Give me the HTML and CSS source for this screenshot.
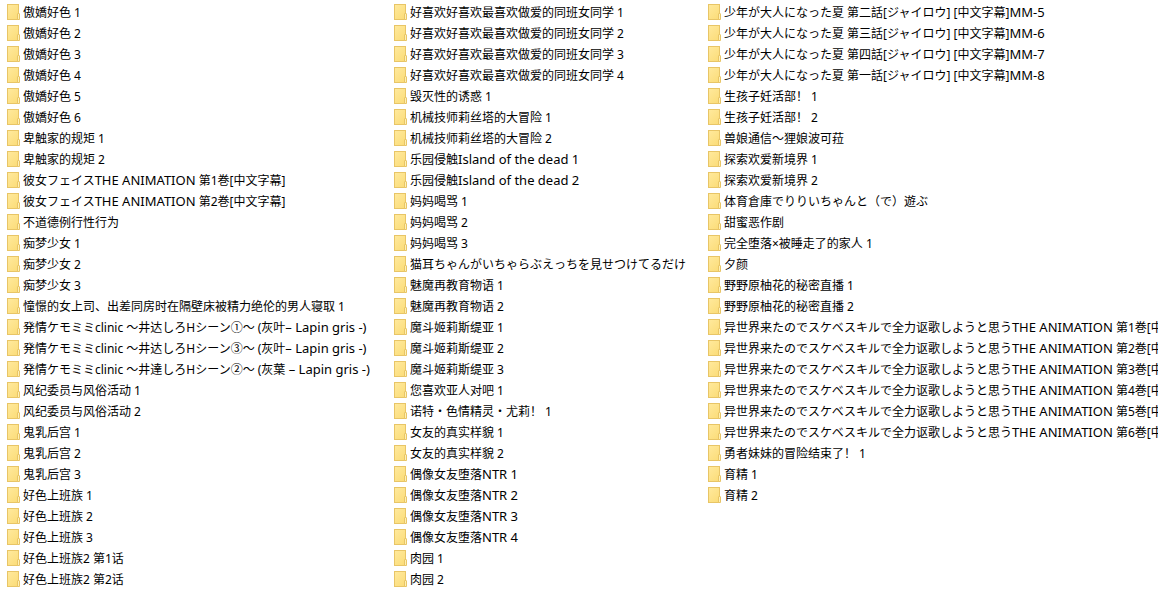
FILE: index.html
```html
<!DOCTYPE html>
<html lang="zh-CN">
<head>
    <meta charset="UTF-8">
    <meta name="viewport" content="width=device-width, initial-scale=1.0">
    <title>文件夹</title>
    <link rel="stylesheet" href="styles.css">
</head>
<body>
    <main class="file-view">
        <ul class="column">
            <li class="folder">傲嬌好色 1</li>
            <li class="folder">傲嬌好色 2</li>
            <li class="folder">傲嬌好色 3</li>
            <li class="folder">傲嬌好色 4</li>
            <li class="folder">傲嬌好色 5</li>
            <li class="folder">傲嬌好色 6</li>
            <li class="folder">卑触家的规矩 1</li>
            <li class="folder">卑触家的规矩 2</li>
            <li class="folder">彼女フェイス<span class="latin">THE ANIMATION</span> 第1巻[中文字幕]</li>
            <li class="folder">彼女フェイス<span class="latin">THE ANIMATION</span> 第2巻[中文字幕]</li>
            <li class="folder">不道德例行性行为</li>
            <li class="folder">痴梦少女 1</li>
            <li class="folder">痴梦少女 2</li>
            <li class="folder">痴梦少女 3</li>
            <li class="folder">憧憬的女上司、出差同房时在隔壁床被精力绝伦的男人寝取 1</li>
            <li class="folder">発情ケモミミclinic ～井达しろHシーン①～ (灰叶<span class="latin">– Lapin gris -)</span></li>
            <li class="folder">発情ケモミミclinic ～井达しろHシーン③～ (灰叶<span class="latin">– Lapin gris -)</span></li>
            <li class="folder">発情ケモミミclinic ～井達しろHシーン②～ (灰葉<span class="latin"> – Lapin gris -)</span></li>
            <li class="folder">风纪委员与风俗活动 1</li>
            <li class="folder">风纪委员与风俗活动 2</li>
            <li class="folder">鬼乳后宫 1</li>
            <li class="folder">鬼乳后宫 2</li>
            <li class="folder">鬼乳后宫 3</li>
            <li class="folder">好色上班族 1</li>
            <li class="folder">好色上班族 2</li>
            <li class="folder">好色上班族 3</li>
            <li class="folder">好色上班族2 第1话</li>
            <li class="folder">好色上班族2 第2话</li>
        </ul>
        <ul class="column">
            <li class="folder">好喜欢好喜欢最喜欢做爱的同班女同学 1</li>
            <li class="folder">好喜欢好喜欢最喜欢做爱的同班女同学 2</li>
            <li class="folder">好喜欢好喜欢最喜欢做爱的同班女同学 3</li>
            <li class="folder">好喜欢好喜欢最喜欢做爱的同班女同学 4</li>
            <li class="folder">毁灭性的诱惑 1</li>
            <li class="folder">机械技师莉丝塔的大冒险 1</li>
            <li class="folder">机械技师莉丝塔的大冒险 2</li>
            <li class="folder">乐园侵触<span class="latin">Island of the dead 1</span></li>
            <li class="folder">乐园侵触<span class="latin">Island of the dead 2</span></li>
            <li class="folder">妈妈喝骂 1</li>
            <li class="folder">妈妈喝骂 2</li>
            <li class="folder">妈妈喝骂 3</li>
            <li class="folder">猫耳ちゃんがいちゃらぶえっちを見せつけてるだけ</li>
            <li class="folder">魅魔再教育物语 1</li>
            <li class="folder">魅魔再教育物语 2</li>
            <li class="folder">魔斗姬莉斯缇亚 1</li>
            <li class="folder">魔斗姬莉斯缇亚 2</li>
            <li class="folder">魔斗姬莉斯缇亚 3</li>
            <li class="folder">您喜欢亚人对吧 1</li>
            <li class="folder">诺特・色情精灵・尤莉！ 1</li>
            <li class="folder">女友的真实样貌 1</li>
            <li class="folder">女友的真实样貌 2</li>
            <li class="folder">偶像女友堕落<span class="latin">NTR 1</span></li>
            <li class="folder">偶像女友堕落<span class="latin">NTR 2</span></li>
            <li class="folder">偶像女友堕落<span class="latin">NTR 3</span></li>
            <li class="folder">偶像女友堕落<span class="latin">NTR 4</span></li>
            <li class="folder">肉园 1</li>
            <li class="folder">肉园 2</li>
        </ul>
        <ul class="column">
            <li class="folder">少年が大人になった夏 第二話[ジャイロウ] [中文字幕]<span class="latin">MM-5</span></li>
            <li class="folder">少年が大人になった夏 第三話[ジャイロウ] [中文字幕]<span class="latin">MM-6</span></li>
            <li class="folder">少年が大人になった夏 第四話[ジャイロウ] [中文字幕]<span class="latin">MM-7</span></li>
            <li class="folder">少年が大人になった夏 第一話[ジャイロウ] [中文字幕]<span class="latin">MM-8</span></li>
            <li class="folder">生孩子妊活部！ 1</li>
            <li class="folder">生孩子妊活部！ 2</li>
            <li class="folder">兽娘通信～狸娘波可菈</li>
            <li class="folder">探索欢爱新境界 1</li>
            <li class="folder">探索欢爱新境界 2</li>
            <li class="folder">体育倉庫でりりいちゃんと（で）遊ぶ</li>
            <li class="folder">甜蜜恶作剧</li>
            <li class="folder">完全堕落×被睡走了的家人 1</li>
            <li class="folder">夕颜</li>
            <li class="folder">野野原柚花的秘密直播 1</li>
            <li class="folder">野野原柚花的秘密直播 2</li>
            <li class="folder">异世界来たのでスケベスキルで全力讴歌しようと思う<span class="latin">THE ANIMATION</span> 第1巻[中文字幕]</li>
            <li class="folder">异世界来たのでスケベスキルで全力讴歌しようと思う<span class="latin">THE ANIMATION</span> 第2巻[中文字幕]</li>
            <li class="folder">异世界来たのでスケベスキルで全力讴歌しようと思う<span class="latin">THE ANIMATION</span> 第3巻[中文字幕]</li>
            <li class="folder">异世界来たのでスケベスキルで全力讴歌しようと思う<span class="latin">THE ANIMATION</span> 第4巻[中文字幕]</li>
            <li class="folder">异世界来たのでスケベスキルで全力讴歌しようと思う<span class="latin">THE ANIMATION</span> 第5巻[中文字幕]</li>
            <li class="folder">异世界来たのでスケベスキルで全力讴歌しようと思う<span class="latin">THE ANIMATION</span> 第6巻[中文字幕]</li>
            <li class="folder">勇者妹妹的冒险结束了！ 1</li>
            <li class="folder">育精 1</li>
            <li class="folder">育精 2</li>
        </ul>
    </main>
</body>
</html>
```
FILE: styles.css
```css
body {
    margin: 0;
    background-color: #fff;
    color: #000;
    font-family: "Noto Sans", "Noto Sans CJK SC", "Noto Sans CJK JP", sans-serif;
    font-size: 12px;
    line-height: 21px;
}

.file-view {
    display: grid;
    grid-template-columns: 387fr 314fr 450fr;
    padding: 2px 0 0 7px;
    overflow: hidden;
}

.column {
    min-width: 0;
    margin: 0;
    padding: 0;
    list-style: none;
}

.folder {
    position: relative;
    height: 21px;
    padding-left: 16px;
    white-space: nowrap;
}

.latin {
    font-size: 13px;
    line-height: 1;
}

/* folder back */
.folder::before {
    content: "";
    position: absolute;
    left: 0;
    top: 2px;
    box-sizing: border-box;
    width: 12px;
    height: 16px;
    border: 1px solid #e8c566;
    background: linear-gradient(135deg, #ffe99c, #fbdc78);
}

/* small flap at the lower right corner */
.folder::after {
    content: "";
    position: absolute;
    left: 10px;
    top: 11px;
    box-sizing: border-box;
    width: 3px;
    height: 7px;
    border: 1px solid #e8c566;
    border-radius: 1px 1px 0 0;
    background-color: #fff0b4;
}
```
